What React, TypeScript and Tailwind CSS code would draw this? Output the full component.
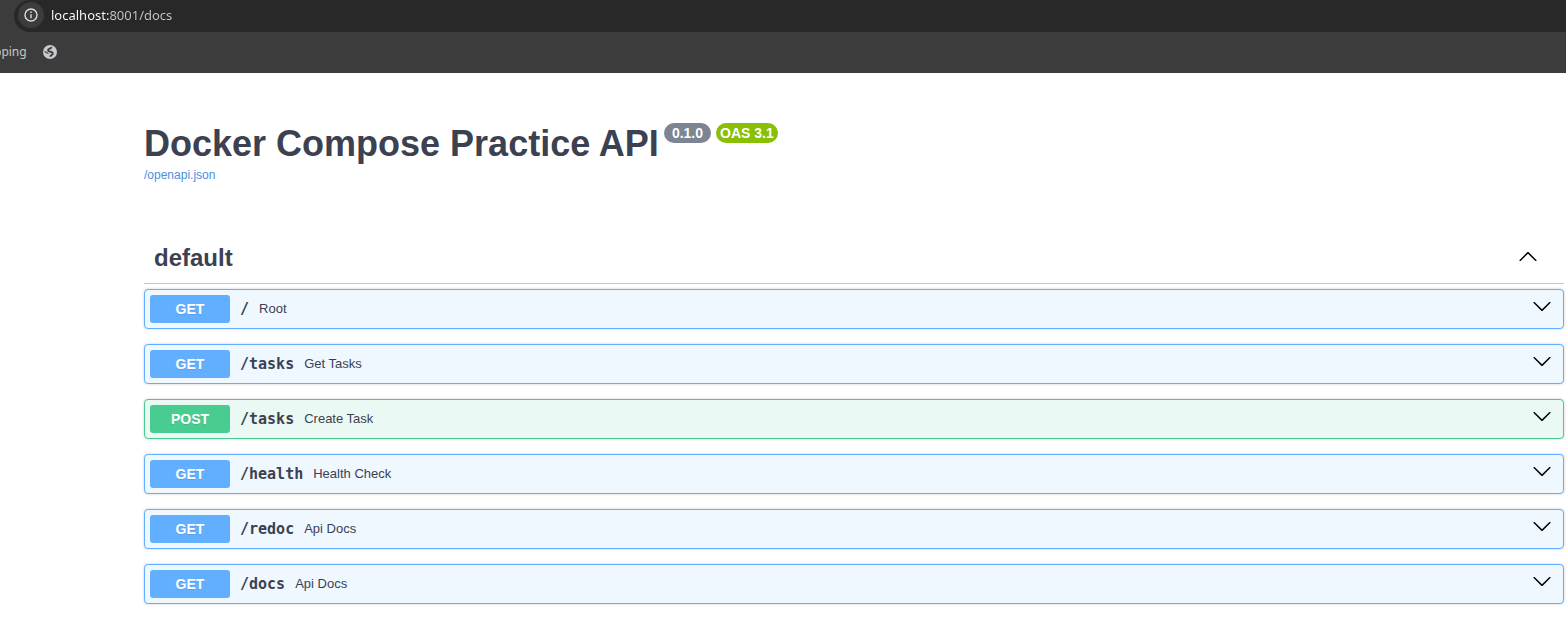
import { useState } from "react";

type Operation = { method: "GET" | "POST"; path: string; summary: string };

const operations: Operation[] = [
  { method: "GET", path: "/", summary: "Root" },
  { method: "GET", path: "/tasks", summary: "Get Tasks" },
  { method: "POST", path: "/tasks", summary: "Create Task" },
  { method: "GET", path: "/health", summary: "Health Check" },
  { method: "GET", path: "/redoc", summary: "Api Docs" },
  { method: "GET", path: "/docs", summary: "Api Docs" },
];

const themes = {
  GET: { row: "border-[#61affe] bg-[#eff7ff]", badge: "bg-[#61affe]" },
  POST: { row: "border-[#49cc90] bg-[#eaf9f3]", badge: "bg-[#49cc90]" },
};

function ArrowDown() {
  return (
    <svg viewBox="0 0 20 20" className="size-5 shrink-0" fill="#000" aria-hidden="true">
      <path d="M17.418 6.109c.272-.268.709-.268.979 0s.271.701 0 .969l-7.908 7.83c-.27.268-.707.268-.979 0l-7.908-7.83c-.27-.268-.27-.701 0-.969.271-.268.709-.268.979 0L10 13.25z" />
    </svg>
  );
}

function ArrowUp() {
  return (
    <svg viewBox="0 0 20 20" className="size-5 shrink-0" fill="#000" aria-hidden="true">
      <path d="M17.418 14.908c.272.268.709.268.979 0s.271-.701 0-.969l-7.908-7.83c-.27-.268-.707-.268-.979 0l-7.908 7.83c-.27.268-.27.701 0 .969.271.268.709.268.979 0L10 7.767z" />
    </svg>
  );
}

function Globe() {
  return (
    <svg viewBox="0 0 16 16" className="size-4" fill="none" stroke="#3c3c3c" aria-hidden="true">
      <circle cx="8" cy="8" r="7" fill="#c7cacf" stroke="none" />
      <path d="M9.4 2.8C9.6 5 6 4.200 6 6.200S10.800 7.400 10.800 9.300 8.600 10.800 8.200 12.800" strokeWidth="1.900" />
      <path d="M2.600 7.600 6.400 9.400" strokeWidth="1.100" />
    </svg>
  );
}

function BrowserBar() {
  return (
    <header className="bg-[#3c3c3c] font-['Noto_Sans','Open_Sans',sans-serif]">
      <div className="pl-3.5">
        <div className="flex h-8 items-start rounded-l-full bg-[#282828] pt-0.5 pl-1">
          <button type="button" aria-label="View site information" className="flex size-6.5 shrink-0 items-center justify-center rounded-full bg-[#3c3c3c]">
            <svg viewBox="0 0 14 14" className="size-3.5" fill="none" stroke="#dcdcdc" strokeWidth="1.4" aria-hidden="true">
              <circle cx="7" cy="7" r="6" />
              <path d="M7 6.200v4M7 3.600v1.400" />
            </svg>
          </button>
          <input
            type="text"
            aria-label="Address"
            defaultValue="localhost:8001/docs"
            spellCheck={false}
            className="ml-[7px] h-6.5 min-w-0 flex-1 bg-[linear-gradient(90deg,#fff_59px,#c7c7c7_59px)] bg-clip-text text-[13px] leading-6.5 text-transparent caret-white outline-none"
          />
        </div>
      </div>
      <nav aria-label="Bookmarks" className="flex h-[41px] items-start gap-[15px] overflow-hidden pt-3">
        <a href="#shopping" className="-ml-1.5 text-xs leading-4 text-[#c7c7c7]">pping</a>
        <a href="#site" aria-label="Bookmarked site">
          <Globe />
        </a>
      </nav>
    </header>
  );
}

function OperationRow({ method, path, summary }: Operation) {
  const theme = themes[method];
  return (
    <li className={`rounded-sm border shadow-[0_0_3px_rgba(0,0,0,0.19)] ${theme.row}`}>
      <button type="button" className="flex w-full items-center p-[5px] text-left">
        <span className={`w-20 rounded-[3px] text-center text-sm leading-7 font-bold text-white [text-shadow:0_1px_0_rgba(0,0,0,0.1)] ${theme.badge}`}>
          {method}
        </span>
        <span className="px-2.5 font-['DejaVu_Sans_Mono',monospace] text-[15px] leading-5 font-bold">{path}</span>
        <span className="flex-1 text-[13px] leading-5">{summary}</span>
        <span className="mr-1.5 mb-1.5">
          <ArrowDown />
        </span>
      </button>
    </li>
  );
}

export default function App() {
  const [open, setOpen] = useState(true);
  return (
    <div className="min-h-screen bg-white font-['Liberation_Sans',Arial,sans-serif] text-[#3b4151]">
      <BrowserBar />
      <main className="pt-12 pr-0.5 pb-6 pl-36">
        <div className="flex items-start gap-[5px]">
          <h1 className="text-4xl leading-[45px] font-bold">Docker Compose Practice API</h1>
          <span className="mt-0.5 rounded-full bg-[#7d8492] px-2 text-sm leading-5 font-bold text-white">0.1.0</span>
          <span className="mt-0.5 rounded-full bg-[#89bf04] px-1 text-sm leading-5 font-bold text-white">OAS 3.1</span>
        </div>
        <a href="/openapi.json" className="block text-xs leading-[18px] text-[#4990e2]">/openapi.json</a>
        <section className="mt-12">
          <h2 className="border-b border-[#3b4151]/30">
            <button
              type="button"
              aria-expanded={open}
              onClick={() => setOpen(!open)}
              className="flex w-full items-start justify-between pt-2.5 pr-[26px] pb-[9px] pl-2.5 text-2xl leading-8 font-bold"
            >
              default
              <span className="pt-1">
                <ArrowUp />
              </span>
            </button>
          </h2>
          {open && (
            <ul className="mt-[5px] flex flex-col gap-[15px]">
              {operations.map((op) => (
                <OperationRow key={op.method + op.path} {...op} />
              ))}
            </ul>
          )}
        </section>
      </main>
    </div>
  );
}
